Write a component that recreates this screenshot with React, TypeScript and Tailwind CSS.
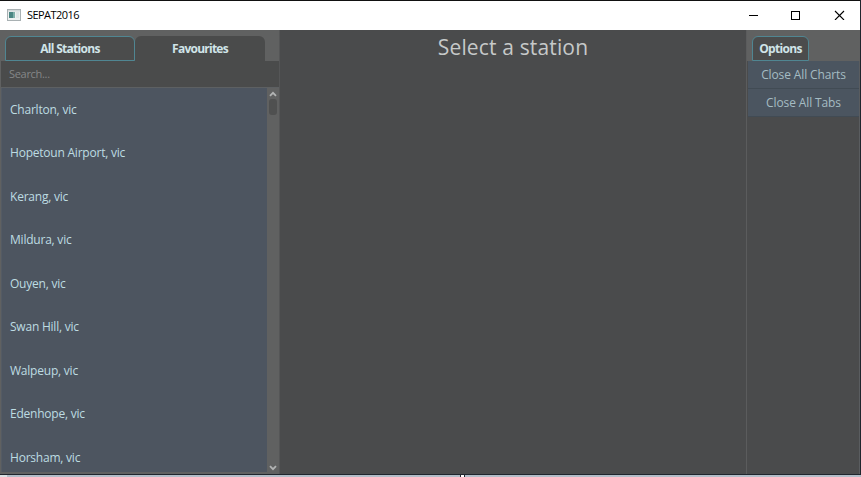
const stations = [
  'Charlton, vic',
  'Hopetoun Airport, vic',
  'Kerang, vic',
  'Mildura, vic',
  'Ouyen, vic',
  'Swan Hill, vic',
  'Walpeup, vic',
  'Edenhope, vic',
  'Horsham, vic',
];

function TitleBar() {
  return (
    <header className="flex h-[30px] shrink-0 items-center border-t border-[#111] bg-white pl-[7px] text-black">
      <svg width="14" height="12" viewBox="0 0 14 12" className="mb-[2px] shrink-0">
        <rect x="0.5" y="0.5" width="13" height="11" fill="#eef1f1" stroke="#a9b1b3" />
        <rect x="1" y="1" width="12" height="1.5" fill="#d3dadb" />
        <rect x="2" y="3" width="6" height="6" fill="#4b8683" />
        <rect x="6" y="3" width="2" height="6" fill="#80b0aa" />
        <rect x="9" y="3" width="3" height="6" fill="#dfe6e6" />
      </svg>
      <span className="mb-[2px] ml-[6px] text-[11px] leading-none tracking-[-0.55px]">SEPAT2016</span>
      <svg className="mr-[15px] mb-[2px] ml-auto" width="96" height="10" viewBox="0 0 96 10" fill="none" stroke="#000" shapeRendering="crispEdges">
        <path d="M0 5.5h9M42.5 1v8M42 1.5h9M42 9.5h9M50.5 1v8" />
        <path d="M86 1l9 9M95 1l-9 9" shapeRendering="auto" strokeWidth="1.1" />
      </svg>
    </header>
  );
}

function Tab({ label, active, className }: { label: string; active?: boolean; className: string }) {
  return (
    <button
      className={`h-[25px] rounded-t-[6px] text-[12px] leading-none font-bold text-[#d0e4e8] ${
        active ? 'border border-[#508692] bg-[#4b4c4c]' : 'bg-[#4a4b4b]'
      } ${className}`}
    >
      {label}
    </button>
  );
}

function StationPanel() {
  return (
    <aside className="flex w-[280px] shrink-0 flex-col border-r border-[#555657] bg-[#606161]">
      <div className="flex h-[31px] shrink-0 items-end pl-[5px]">
        <Tab label="All Stations" active className="w-[130px] tracking-[-0.7px]" />
        <Tab label="Favourites" className="w-[130px] tracking-[-0.75px]" />
      </div>
      <div className="ml-px flex h-[26px] shrink-0 items-center bg-[#4a4b4b] pb-[2px] pl-2 text-[11px] leading-none tracking-[-0.3px] text-[#858788]">
        Search...
      </div>
      <div className="mb-[2px] ml-px flex min-h-0 flex-1 border-t border-[#5d6062]">
        <ul className="w-[266px] overflow-hidden border-l border-[#545b64] bg-[#4d5560]">
          {stations.map((name) => (
            <li key={name} className="flex h-[43.5px] items-center pl-2 text-[12px] leading-none tracking-[-0.22px] text-[#bddce2]">
              {name}
            </li>
          ))}
        </ul>
        <div className="flex flex-1 flex-col items-center bg-[#606161] pt-[3px] pb-px">
          <svg width="8" height="6" viewBox="0 0 8 6" fill="none" stroke="#b2b4b4" strokeWidth="1.8">
            <path d="M1 4.8l3-3 3 3" />
          </svg>
          <div className="mt-[2px] h-4 w-[8px] rounded-[3px] bg-[#4f5050]" />
          <svg className="mt-auto" width="8" height="6" viewBox="0 0 8 6" fill="none" stroke="#b2b4b4" strokeWidth="1.8">
            <path d="M1 1.2l3 3 3-3" />
          </svg>
        </div>
      </div>
    </aside>
  );
}

function OptionsPanel() {
  return (
    <aside className="flex w-[114px] shrink-0 flex-col border-l border-[#5b5c5d]">
      <div className="flex h-[31px] items-end bg-[#606161] pl-[5px]">
        <Tab label="Options" active className="w-[57px] tracking-[-0.65px]" />
      </div>
      <div className="flex flex-1 flex-col border-r border-[#5a5d60] pl-px">
        {['Close All Charts', 'Close All Tabs'].map((label) => (
          <button key={label} className="h-7 border-b border-[#414b54] bg-[#4b5560] text-[12px] leading-none tracking-[-0.12px] text-[#a5bcc3]">
            {label}
          </button>
        ))}
      </div>
    </aside>
  );
}

export default function App() {
  return (
    <div className="flex h-[477px] w-[861px] flex-col overflow-hidden bg-[#b3bdc8] font-['Open_Sans','Noto_Sans',sans-serif]">
      <div className="flex h-[475px] shrink-0 flex-col border-r border-b border-[#20262d] bg-[#4a4b4c]">
        <TitleBar />
        <div className="flex min-h-0 flex-1">
          <StationPanel />
          <main className="flex-1 pt-[3px] text-center text-[21px] leading-[28px] tracking-[0.15px] text-[#c6c9c9]">
            <h1>Select a station</h1>
          </main>
          <OptionsPanel />
        </div>
      </div>
      <div className="flex h-[2px]">
        <div className="h-[2px] w-[7px] bg-[#dce2e5]" />
        <div className="ml-[453px] h-[2px] w-[5px] border-x border-[#20262d] bg-white" />
      </div>
    </div>
  );
}
